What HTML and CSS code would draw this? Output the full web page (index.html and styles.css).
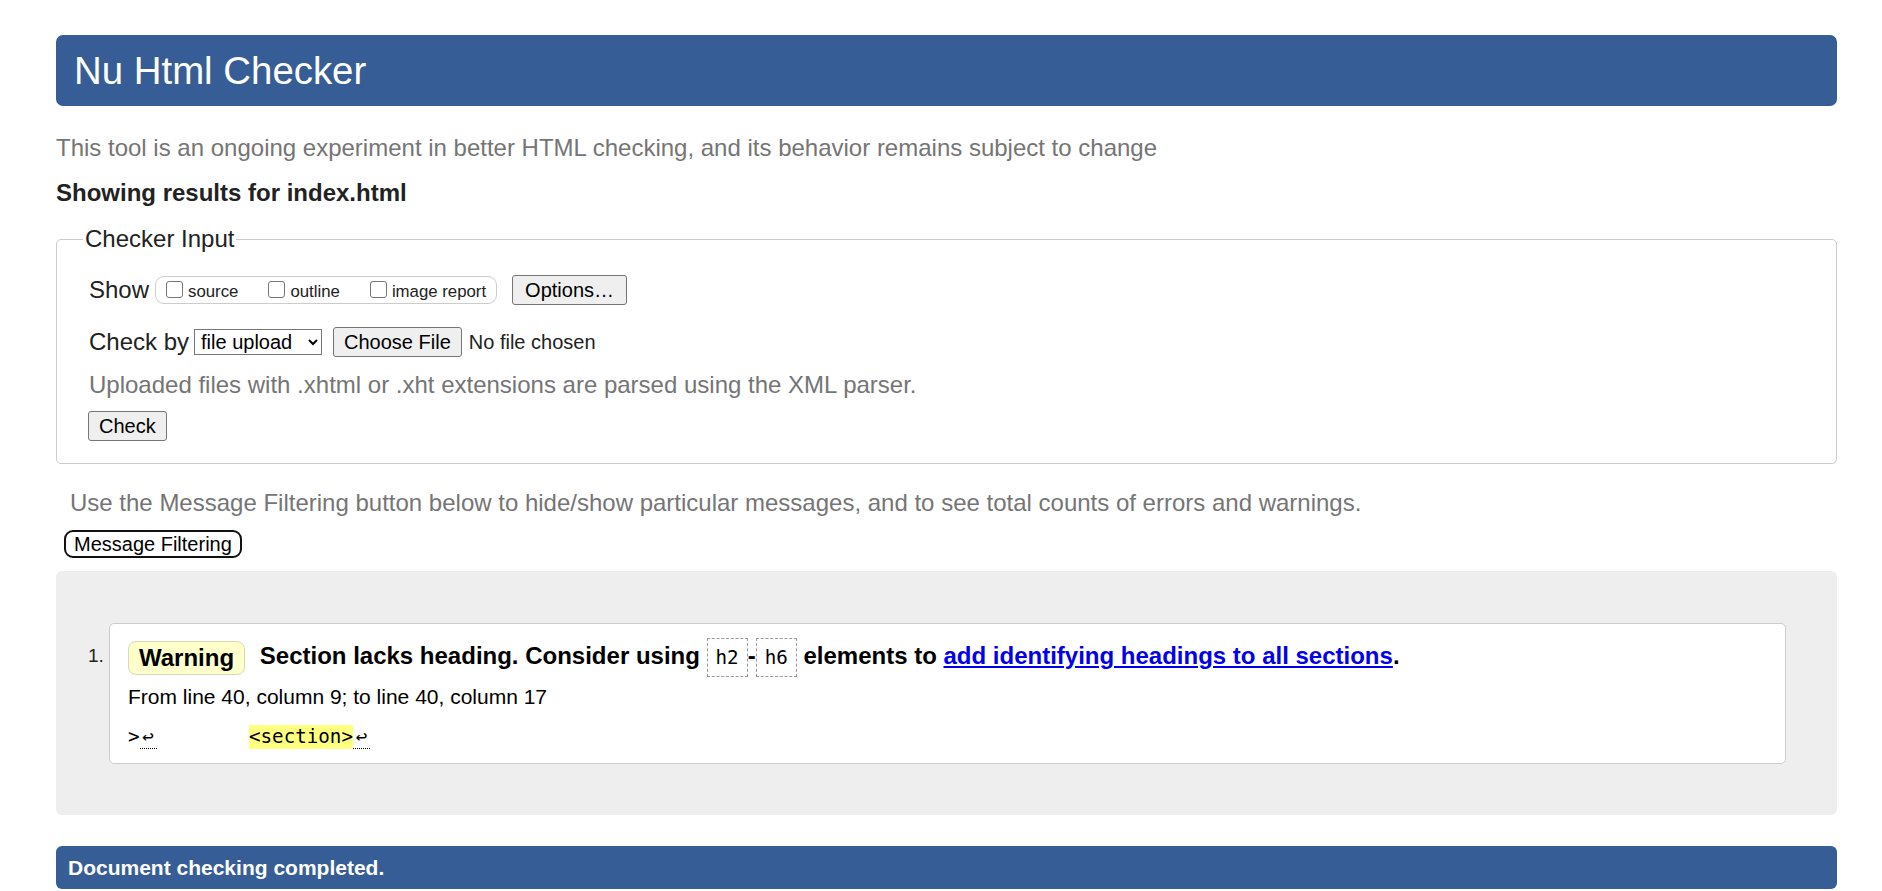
FILE: index.html
```html
<!DOCTYPE html>
<html lang="en">
<head>
<meta charset="utf-8">
<title>Showing results for index.html - Nu Html Checker</title>
<link rel="stylesheet" href="styles.css">
</head>
<body>
<h1 class="masthead">Nu Html Checker</h1>
<p class="intro">This tool is an ongoing experiment in better HTML checking, and its behavior remains subject to change</p>
<p class="results-for">Showing results for index.html</p>
<form class="checker-form">
  <fieldset class="checker-input">
    <legend class="checker-legend">Checker Input</legend>
    <div class="form-row show-row">
      <span class="row-label">Show</span>
      <span class="show-options">
        <label class="opt"><input type="checkbox" class="cb"><span>source</span></label>
        <label class="opt"><input type="checkbox" class="cb"><span>outline</span></label>
        <label class="opt"><input type="checkbox" class="cb"><span>image report</span></label>
      </span>
      <button type="button" class="btn options-btn">Options…</button>
    </div>
    <div class="form-row checkby-row">
      <label class="row-label" for="docselect">Check by</label>
      <select id="docselect" class="doc-select"><option>file upload</option></select>
      <button type="button" class="btn file-btn">Choose File</button>
      <span class="file-status">No file chosen</span>
    </div>
    <p class="hint">Uploaded files with .xhtml or .xht extensions are parsed using the XML parser.</p>
    <button type="button" class="btn check-btn">Check</button>
  </fieldset>
</form>
<p class="filter-note">Use the Message Filtering button below to hide/show particular messages, and to see total counts of errors and warnings.</p>
<button type="button" class="filter-btn">Message Filtering</button>
<div class="results">
  <ol class="messages">
    <li class="message-item">
      <span class="msg-num">1.</span>
      <div class="msg-card">
        <p class="msg-text"><strong class="badge">Warning</strong> <span>Section lacks heading. Consider using <code class="inline-code">h2</code>-<code class="inline-code">h6</code> elements to <a class="msg-link" href="#">add identifying headings to all sections</a>.</span></p>
        <p class="location">From line 40, column 9; to line 40, column 17</p>
        <p class="extract"><code class="extract-code">&gt;<span class="lf">↩</span>        <mark class="hl">&lt;section&gt;</mark><span class="lf">↩</span></code></p>
      </div>
    </li>
  </ol>
</div>
<p class="done">Document checking completed.</p>
</body>
</html>
```

FILE: styles.css
```css
html {
  margin: 0;
}

body {
  margin: 0;
  padding: 35px 45px 0 56px;
  font-family: "Liberation Sans", Arial, sans-serif;
  font-size: 24px;
  line-height: 28px;
  color: #222;
  background: #fff;
}

.masthead {
  margin: 0;
  height: 71px;
  padding: 0 18px;
  line-height: 71px;
  font-size: 38.4px;
  font-weight: normal;
  color: #fff;
  background: #365d95;
  border-radius: 7px;
}

.intro {
  margin: 28px 0 0;
  color: #757575;
}

.results-for {
  margin: 17px 0 0;
  font-weight: bold;
}

.checker-form {
  margin: 18px 0 0;
}

.checker-input {
  margin: 0;
  min-width: 0;
  padding: 0 26px 22px;
  border: 1px solid #ccc;
  border-radius: 5px;
}

.checker-legend {
  padding: 0 2px;
  line-height: 28px;
}

.form-row {
  display: flex;
  align-items: center;
  height: 30px;
  padding-left: 6px;
}

.show-row {
  margin-top: 22px;
}

.checkby-row {
  margin-top: 22px;
}

.show-options {
  display: flex;
  align-items: center;
  gap: 30px;
  height: 26px;
  margin-left: 6px;
  padding: 0 10px;
  border: 1px solid #ccc;
  border-radius: 9px;
}

.opt {
  display: flex;
  align-items: center;
  font-size: 16.8px;
  padding-top: 3px;
}

.cb {
  appearance: none;
  -webkit-appearance: none;
  box-sizing: border-box;
  width: 17px;
  height: 17px;
  margin: 0 5px 5px 0;
  border: 1.5px solid #767676;
  border-radius: 3px;
  background: #fff;
}

.btn {
  height: 30px;
  padding: 0 10px;
  font-family: inherit;
  font-size: 20px;
  color: #000;
  background: #efefef;
  border: 1px solid #767676;
  border-radius: 3px;
}

.options-btn {
  margin-left: 15px;
  padding: 0 12px;
}

.doc-select {
  margin-left: 5px;
  width: 128px;
  height: 26px;
  padding: 0 2px;
  font-family: inherit;
  font-size: 20px;
  color: #000;
  background: #fff;
  border: 1px solid #767676;
  border-radius: 0;
}

.file-btn {
  margin-left: 11px;
}

.file-status {
  margin-left: 7px;
  font-size: 20px;
}

.hint {
  margin: 14px 0 0;
  padding-left: 6px;
  color: #757575;
}

.check-btn {
  display: block;
  margin: 12px 0 0 5px;
}

.filter-note {
  margin: 25px 0 0 14px;
  color: #757575;
}

.filter-btn {
  display: block;
  height: 28px;
  margin: 13px 0 0 8px;
  padding: 0 8px;
  font-family: inherit;
  font-size: 20px;
  color: #000;
  background: #fff;
  border: 2px solid #111;
  border-radius: 9px;
}

.results {
  margin-top: 13px;
  padding: 52px 51px 51px 32px;
  background: #eee;
  border-radius: 6px;
}

.messages {
  margin: 0;
  padding: 0;
  list-style: none;
}

.message-item {
  display: flex;
}

.msg-num {
  flex: 0 0 21px;
  margin-top: 15px;
  font-size: 19px;
  line-height: 36px;
}

.msg-card {
  flex: 1;
  padding: 14px 18px 15px;
  background: #fff;
  border: 1px solid #ccc;
  border-radius: 5px;
}

.msg-text {
  margin: 0;
  height: 36px;
  line-height: 36px;
  font-weight: bold;
  color: #000;
}

.badge {
  display: inline-block;
  vertical-align: middle;
  margin-right: 8px;
  padding: 2px 10px;
  line-height: 28px;
  background: #ffffcc;
  border: 1px solid #d8d8b4;
  border-radius: 8px;
}

.inline-code {
  padding: 7px 8px;
  font-family: "DejaVu Sans Mono", "Liberation Mono", monospace;
  font-size: 19.2px;
  font-weight: normal;
  border: 1px dashed #999;
}

.msg-link {
  color: #0000ee;
  text-decoration: underline;
}

.location {
  margin: 10px 0 0;
  font-size: 21px;
  line-height: 26px;
  color: #000;
}

.extract {
  margin: 12px 0 0;
  height: 26px;
  line-height: 26px;
}

.extract-code {
  white-space: pre;
  font-family: "DejaVu Sans Mono", "Liberation Mono", monospace;
  font-size: 19.2px;
  color: #000;
}

.lf {
  display: inline-block;
  width: 17px;
  line-height: 22px;
  text-align: center;
  border-bottom: 1px dotted #000;
}

.hl {
  display: inline-block;
  line-height: 24px;
  color: #000;
  background: #ffff80;
}

.done {
  margin: 31px 0 0;
  height: 43px;
  padding: 0 12px;
  line-height: 43px;
  font-size: 21px;
  font-weight: bold;
  color: #fff;
  background: #365d95;
  border-radius: 6px;
}
```
